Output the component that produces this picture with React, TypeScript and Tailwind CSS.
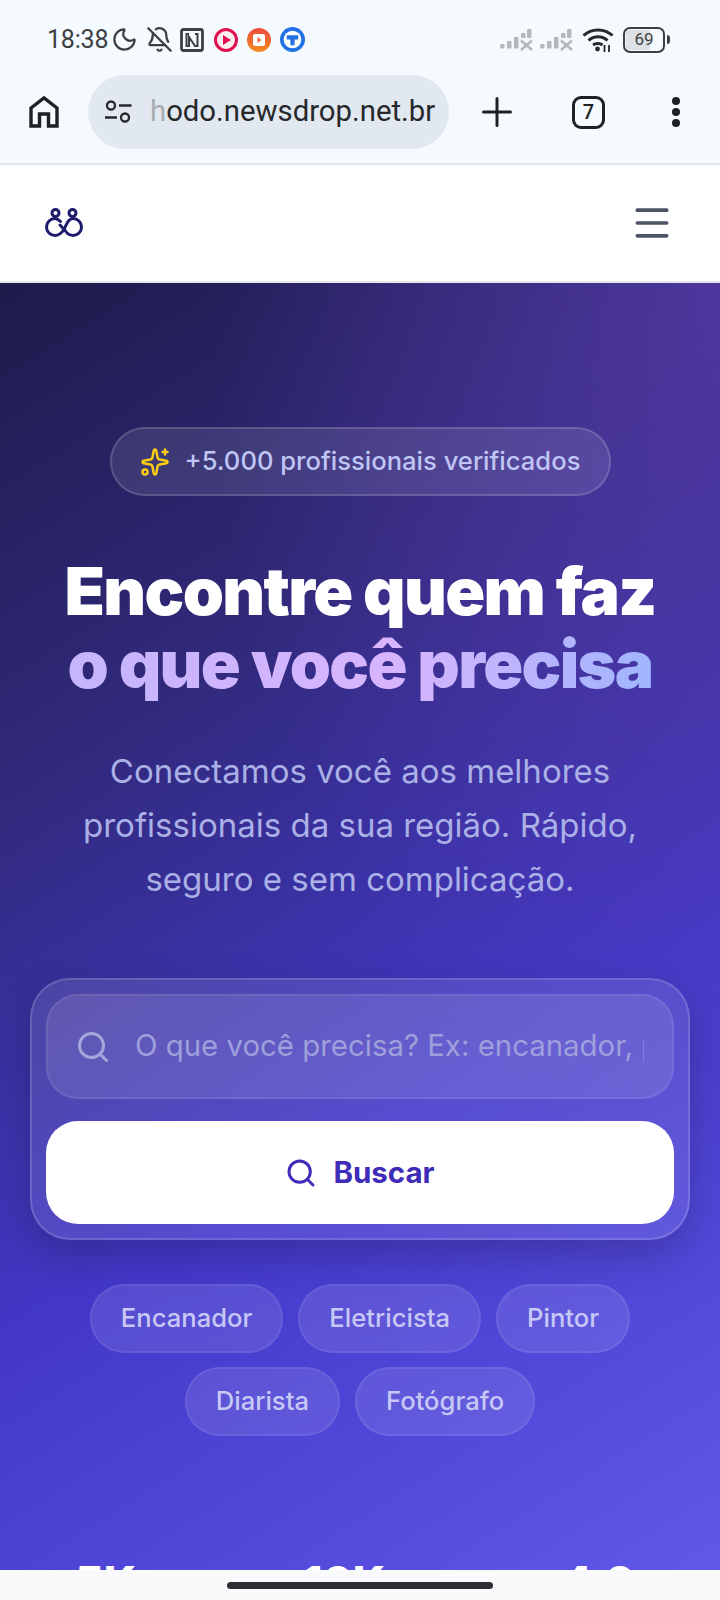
import { Search, Sparkles, Moon, BellOff, Menu } from 'lucide-react';

const chipRows = [
  ['Encanador', 'Eletricista', 'Pintor'],
  ['Diarista', 'Fotógrafo'],
];

function SignalIcon() {
  return (
    <svg width="33" height="24" viewBox="0 0 33 24" fill="none">
      <rect x="0" y="16" width="4.500" height="4.500" rx="1.500" fill="#b4b8bd" />
      <rect x="7" y="13" width="4.500" height="7.500" rx="1" fill="#b4b8bd" />
      <rect x="14" y="9" width="4.500" height="11.500" rx="1" fill="#b4b8bd" />
      <rect x="27" y="1" width="4.500" height="9" rx="1" fill="#b4b8bd" />
      <rect x="21" y="5" width="4.500" height="5" rx="1" fill="#b4b8bd" />
      <path d="M21 12.500 32 22M32 12.500 21 22" stroke="#b4b8bd" strokeWidth="2.600" />
    </svg>
  );
}

function StatusBar() {
  return (
    <div className="flex h-[70px] items-center justify-between pl-[47px] pr-[50px] pt-[9px]">
      <div className="flex items-center text-[#3c4043]">
        <span className="text-[25px] leading-none tracking-[-0.2px]">18:38</span>
        <Moon className="ml-[3px] h-[27px] w-[27px]" strokeWidth={2} />
        <BellOff className="ml-[8px] h-[27px] w-[27px]" strokeWidth={2} />
        <svg className="ml-[7px]" width="24" height="24" viewBox="0 0 24 24" fill="none">
          <rect x="1.500" y="1.500" width="21" height="21" rx="2" stroke="#3c4043" strokeWidth="2.800" />
          <path d="M9 6H6.500v12H9V9l6 9h2.500V6H15" stroke="#3c4043" strokeWidth="2" />
        </svg>
        <svg className="ml-[10px]" width="24" height="24" viewBox="0 0 24 24">
          <circle cx="12" cy="12" r="10.500" fill="#fdeef2" stroke="#e0134f" strokeWidth="3" />
          <path d="M9 7l8 5-8 5z" fill="#e0134f" />
        </svg>
        <svg className="ml-[9px]" width="24" height="24" viewBox="0 0 24 24">
          <defs>
            <linearGradient id="orangeBadge" x1="0" y1="0" x2="0" y2="1">
              <stop offset="0" stopColor="#ec4a3c" />
              <stop offset="1" stopColor="#f58b1f" />
            </linearGradient>
          </defs>
          <circle cx="12" cy="12" r="12" fill="url(#orangeBadge)" />
          <rect x="6" y="6" width="12" height="12" rx="2" fill="#fff" />
          <path d="M10.500 9l4 3-4 3z" fill="#f2672c" />
        </svg>
        <svg className="ml-[9px]" width="25" height="25" viewBox="0 0 24 24">
          <circle cx="12" cy="12" r="12" fill="#2170e4" />
          <circle cx="12" cy="12" r="8.500" fill="#fff" />
          <path d="M6.500 8h11v4h-3.500v5.500h-4V12H6.500z" fill="#2170e4" />
        </svg>
      </div>
      <div className="flex items-center">
        <SignalIcon />
        <div className="ml-[7px]">
          <SignalIcon />
        </div>
        <svg className="ml-[9px]" width="32" height="27" viewBox="0 0 32 27" fill="none">
          <path d="M1.500 9.500c8-7.500 21-7.500 29 0" stroke="#26282b" strokeWidth="3" />
          <path d="M6.500 14.500c5.500-5 13.500-5 19 0" stroke="#26282b" strokeWidth="3" />
          <path d="M11 19c2.500-2 7-2 9.500 0" stroke="#26282b" strokeWidth="3" />
          <circle cx="15.500" cy="23" r="2.400" fill="#26282b" />
          <path d="M22.500 19v7M27 19v7" stroke="#26282b" strokeWidth="1.800" />
        </svg>
        <div className="ml-[9px] flex items-center">
          <div className="relative flex h-[26px] w-[42px] items-center justify-center overflow-hidden rounded-[7px] border-2 border-[#3c4043]">
            <div className="absolute inset-y-[1px] left-[1px] w-[24px] rounded-[3px] bg-[#dde1e5]" />
            <span className="relative text-[17px] leading-none text-[#3c4043]">69</span>
          </div>
          <div className="ml-[2px] h-[9px] w-[3px] rounded-r-sm bg-[#3c4043]" />
        </div>
      </div>
    </div>
  );
}

function BrowserBar() {
  return (
    <div className="flex h-[93px] items-center pb-[14px] pl-[28px] pt-[5px] text-[#1f2125]">
      <svg width="32" height="34" viewBox="0 0 32 34" fill="none" stroke="#1f2125" strokeWidth="3.400">
        <path d="M3 31V13L16 3l13 10v18h-8.500V19h-9v12z" />
      </svg>
      <div className="ml-[28px] flex h-[74px] w-[361px] items-center overflow-hidden rounded-full bg-[#e2e8f0] pl-[16px]">
        <svg width="28" height="28" viewBox="0 0 28 28" fill="none" className="shrink-0">
          <circle cx="7" cy="7.500" r="4" stroke="#26282b" strokeWidth="2.300" />
          <path d="M15 7.500h12.500M1 19.500h12" stroke="#26282b" strokeWidth="2.300" />
          <circle cx="21" cy="19.500" r="4" stroke="#26282b" strokeWidth="2.300" />
        </svg>
        <span className="ml-[18px] whitespace-nowrap text-[29.3px] leading-none text-[#26282b]">
          <span className="text-[#a8adb3]">h</span>odo.newsdrop.net.br
        </span>
      </div>
      <svg className="ml-[33px]" width="30" height="30" viewBox="0 0 30 30" fill="none" stroke="#1f2125" strokeWidth="3" strokeLinecap="round">
        <path d="M15 1.500v27M1.500 15h27" />
      </svg>
      <div className="ml-[60px] flex h-[33px] w-[33px] items-center justify-center rounded-[9px] border-[3px] border-[#1f2125] text-[20px] font-medium">
        7
      </div>
      <div className="ml-[67px] flex flex-col gap-[3.500px]">
        <div className="h-[7.500px] w-[7.500px] rounded-full bg-[#1f2125]" />
        <div className="h-[7.500px] w-[7.500px] rounded-full bg-[#1f2125]" />
        <div className="h-[7.500px] w-[7.500px] rounded-full bg-[#1f2125]" />
      </div>
    </div>
  );
}

function Logo() {
  return (
    <svg width="38" height="30" viewBox="0 0 38 30" fill="none" stroke="#1e1b6b" strokeWidth="3" strokeLinecap="round">
      <circle cx="10.500" cy="5" r="3.500" />
      <circle cx="27.500" cy="5" r="3.500" />
      <path d="M10 10.500A8.500 8.500 0 1 0 10 27.500C15 27.500 18 23 19 21.500 22 15 24 10.500 28 10.500A8.500 8.500 0 1 1 28 27.500C25.500 27.500 23.500 26.500 22 25" />
      <path d="M10 10.500C12 10.500 14 12 15.500 13.500" />
      <path d="M15 17 21 23.500" />
    </svg>
  );
}

export default function App() {
  return (
    <div className="flex h-[1600px] w-[720px] flex-col overflow-hidden bg-white font-['Inter',sans-serif]">
      <div className="shrink-0 border-b-2 border-[#dce3ec] bg-[#f5faff] font-['Roboto',sans-serif]">
        <StatusBar />
        <BrowserBar />
      </div>

      <header className="flex h-[118px] shrink-0 items-center justify-between border-b-2 border-[#e5e7eb] bg-white pl-[45px] pr-[46px]">
        <Logo />
        <Menu className="h-[44px] w-[44px] text-[#4b5563]" strokeWidth={2} />
      </header>

      <main className="flex min-h-0 flex-1 flex-col items-center overflow-hidden bg-[radial-gradient(ellipse_at_100%_0%,rgba(88,60,170,0.75),transparent_50%),linear-gradient(148deg,#1e1b4b_0%,#312a7c_30%,#4338ca_62%,#5f58e8_100%)] px-[30px] pt-[144px]">
        <div className="flex h-[69px] w-[501px] shrink-0 items-center justify-center gap-[15px] rounded-full border-2 border-white/15 bg-white/10">
          <Sparkles className="h-[30px] w-[30px] text-[#facc15]" strokeWidth={2} />
          <span className="text-[25.600px] font-medium text-[#bfc5f5]">+5.000 profissionais verificados</span>
        </div>

        <h1 className="mt-[59px] shrink-0 whitespace-nowrap text-center text-[66px] font-black leading-[73px] tracking-[-1.650px] text-white">
          Encontre quem faz
          <br />
          <span className="bg-[linear-gradient(90deg,#c4b5fd,#d8b4fe_55%,#9fb5fd)] bg-clip-text text-transparent">
            o que você precisa
          </span>
        </h1>

        <p className="mt-[43px] w-[600px] shrink-0 text-center text-[33px] leading-[54px] text-[#abb0e6]">
          Conectamos você aos melhores profissionais da sua região. Rápido, seguro e sem complicação.
        </p>

        <div className="mt-[72px] flex w-[660px] shrink-0 flex-col gap-[22px] rounded-[40px] border-2 border-white/15 bg-white/10 p-[14px] shadow-[0_16px_40px_rgba(0,0,0,0.2)]">
          <div className="flex h-[105px] items-center overflow-hidden rounded-[32px] border-2 border-white/[0.08] bg-white/10 pl-[27px] pr-[28px]">
            <Search className="h-[36px] w-[36px] shrink-0 text-[#a5a5dc]" strokeWidth={2} />
            <span className="ml-[24px] overflow-hidden whitespace-nowrap text-[29.400px] text-[#9f9fdc]">
              O que você precisa? Ex: encanador, personal
            </span>
          </div>
          <button className="flex h-[103px] items-center justify-center gap-[16px] rounded-[32px] bg-white text-[#3f2cb8]">
            <Search className="h-[32px] w-[32px]" strokeWidth={2.200} />
            <span className="text-[29.500px] font-bold">Buscar</span>
          </button>
        </div>

        <div className="mt-[44px] flex shrink-0 flex-col items-center gap-[14px]">
          {chipRows.map((row) => (
            <div key={row[0]} className="flex gap-[15px]">
              {row.map((chip) => (
                <div
                  key={chip}
                  className="flex h-[69px] items-center rounded-full border-2 border-white/[0.08] bg-white/10 px-[29px] text-[25.600px] font-medium text-[#c7c8f5]"
                >
                  {chip}
                </div>
              ))}
            </div>
          ))}
        </div>

        <div className="mt-[124px] flex w-full shrink-0 pl-[45px] text-[44px] font-extrabold leading-none text-white">
          <div className="w-[228px]">5K+</div>
          <div className="w-[259px]">10K+</div>
          <div>4.9</div>
        </div>
      </main>

      <div className="flex h-[30px] shrink-0 items-start justify-center bg-[#f8fafc] pt-[12px]">
        <div className="h-[7px] w-[266px] rounded-full bg-[#2c2e31]" />
      </div>
    </div>
  );
}
